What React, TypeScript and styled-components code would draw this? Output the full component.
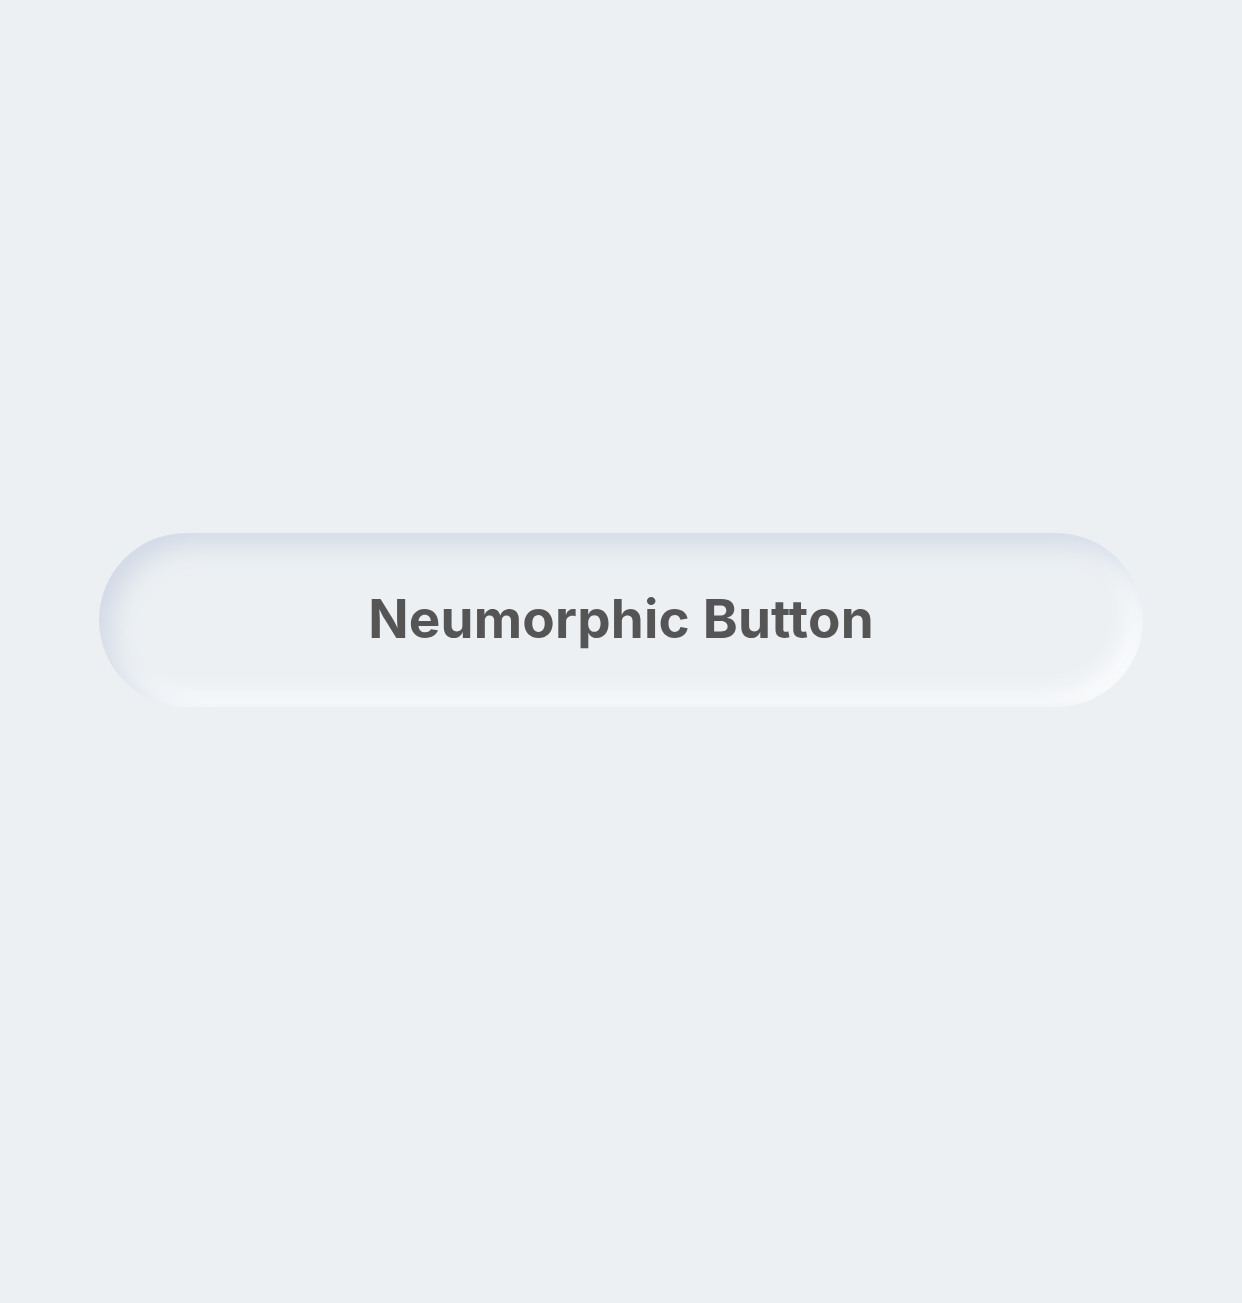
import React from 'react';
import styled, { createGlobalStyle } from 'styled-components';

const GlobalStyle = createGlobalStyle`
  html, body {
    margin: 0;
    padding: 0;
    background: #ecf0f3;
  }
  body {
    font-family: Inter, "Noto Sans", sans-serif;
  }
`

const Page = styled.main`
  width: 100%;
  min-height: 1303px;
  box-sizing: border-box;
  padding: 533px 99px 0;
  background: #ecf0f3;
`

const NeuButton = styled.button`
  display: flex;
  align-items: center;
  justify-content: center;
  width: 100%;
  height: 174px;
  border: none;
  border-radius: 87px;
  background: #ecf0f3;
  box-shadow: inset 12px 12px 24px #d3dae6, inset -12px -12px 24px #fbfcfd;
  font-family: Inter, "Noto Sans", sans-serif;
  font-size: 53px;
  font-weight: 700;
  letter-spacing: 0.2px;
  color: #555555;
  cursor: pointer;
  padding: 0 0 2px;
`

function App() {
    return (
        <>
            <GlobalStyle />
            <Page>
                <NeuButton>Neumorphic Button</NeuButton>
            </Page>
        </>
    )
}

export default App;
